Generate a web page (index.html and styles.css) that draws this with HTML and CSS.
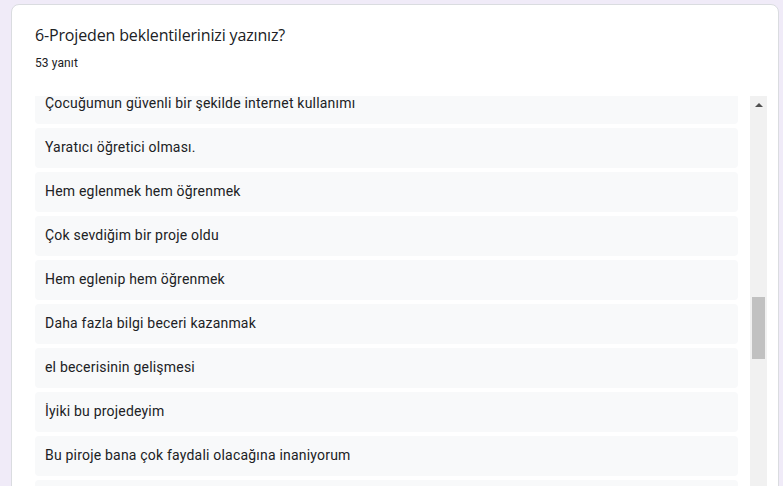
FILE: index.html
```html
<!DOCTYPE html>
<html lang="tr">
<head>
<meta charset="utf-8">
<title>6-Projeden beklentilerinizi yazınız?</title>
<link rel="stylesheet" href="styles.css">
</head>
<body>
<div class="card">
  <div class="title">6-Projeden beklentilerinizi yazınız?</div>
  <div class="count">53 yanıt</div>
  <div class="list-area">
    <div class="viewport">
      <div class="items">
        <div class="item">Çocuğumun güvenli bir şekilde internet kullanımı</div>
        <div class="item">Yaratıcı öğretici olması.</div>
        <div class="item">Hem eglenmek hem öğrenmek</div>
        <div class="item">Çok sevdiğim bir proje oldu</div>
        <div class="item">Hem eglenip hem öğrenmek</div>
        <div class="item">Daha fazla bilgi beceri kazanmak</div>
        <div class="item">el becerisinin gelişmesi</div>
        <div class="item">İyiki bu projedeyim</div>
        <div class="item">Bu piroje bana çok faydali olacağına inaniyorum</div>
        <div class="item"></div>
      </div>
    </div>
    <div class="scrollbar">
      <div class="arrow up"></div>
      <div class="track"><div class="thumb"></div></div>
      <div class="arrow down"></div>
    </div>
  </div>
</div>
</body>
</html>
```

FILE: styles.css
```css
html, body {
  margin: 0;
  padding: 0;
  background: #f0ebf8;
  overflow: hidden;
  height: 486px;
}
body {
  font-family: Roboto, "Liberation Sans", sans-serif;
  color: #202124;
}
.card {
  box-sizing: border-box;
  margin: 4px 0 0 11px;
  width: 768px;
  height: 560px;
  background: #fff;
  border: 1px solid #dadce0;
  border-radius: 8px;
  padding: 18px 11px 0 23px;
}
.title {
  font-family: "Open Sans", Roboto, sans-serif;
  font-size: 16px;
  line-height: 24px;
  color: #202124;
  letter-spacing: -0.15px;
}
.count {
  margin-top: 8px;
  font-size: 12px;
  line-height: 16px;
  color: #202124;
  letter-spacing: 0.1px;
}
.list-area {
  margin-top: 25px;
  display: flex;
  gap: 12px;
  height: 400px;
}
.viewport {
  width: 703px;
  overflow: hidden;
}
.items {
  margin-top: -12px;
  display: flex;
  flex-direction: column;
  gap: 4px;
}
.item {
  box-sizing: border-box;
  height: 40px;
  line-height: 38px;
  padding: 0 10px 2px;
  background: #f8f9fa;
  border-radius: 4px;
  font-size: 14px;
  letter-spacing: 0.2px;
  color: #202124;
  white-space: nowrap;
}
.scrollbar {
  width: 17px;
  background: #f1f1f1;
  display: flex;
  flex-direction: column;
}
.arrow {
  height: 17px;
  display: flex;
  justify-content: center;
  align-items: center;
}
.arrow::before {
  content: "";
  width: 0;
  height: 0;
  border-left: 4px solid transparent;
  border-right: 4px solid transparent;
}
.arrow.up::before {
  border-bottom: 4px solid #505050;
}
.arrow.down::before {
  border-top: 4px solid #505050;
}
.track {
  flex: 1;
  padding: 184px 2px 0 2px;
}
.thumb {
  height: 62px;
  background: #c1c1c1;
}
```
